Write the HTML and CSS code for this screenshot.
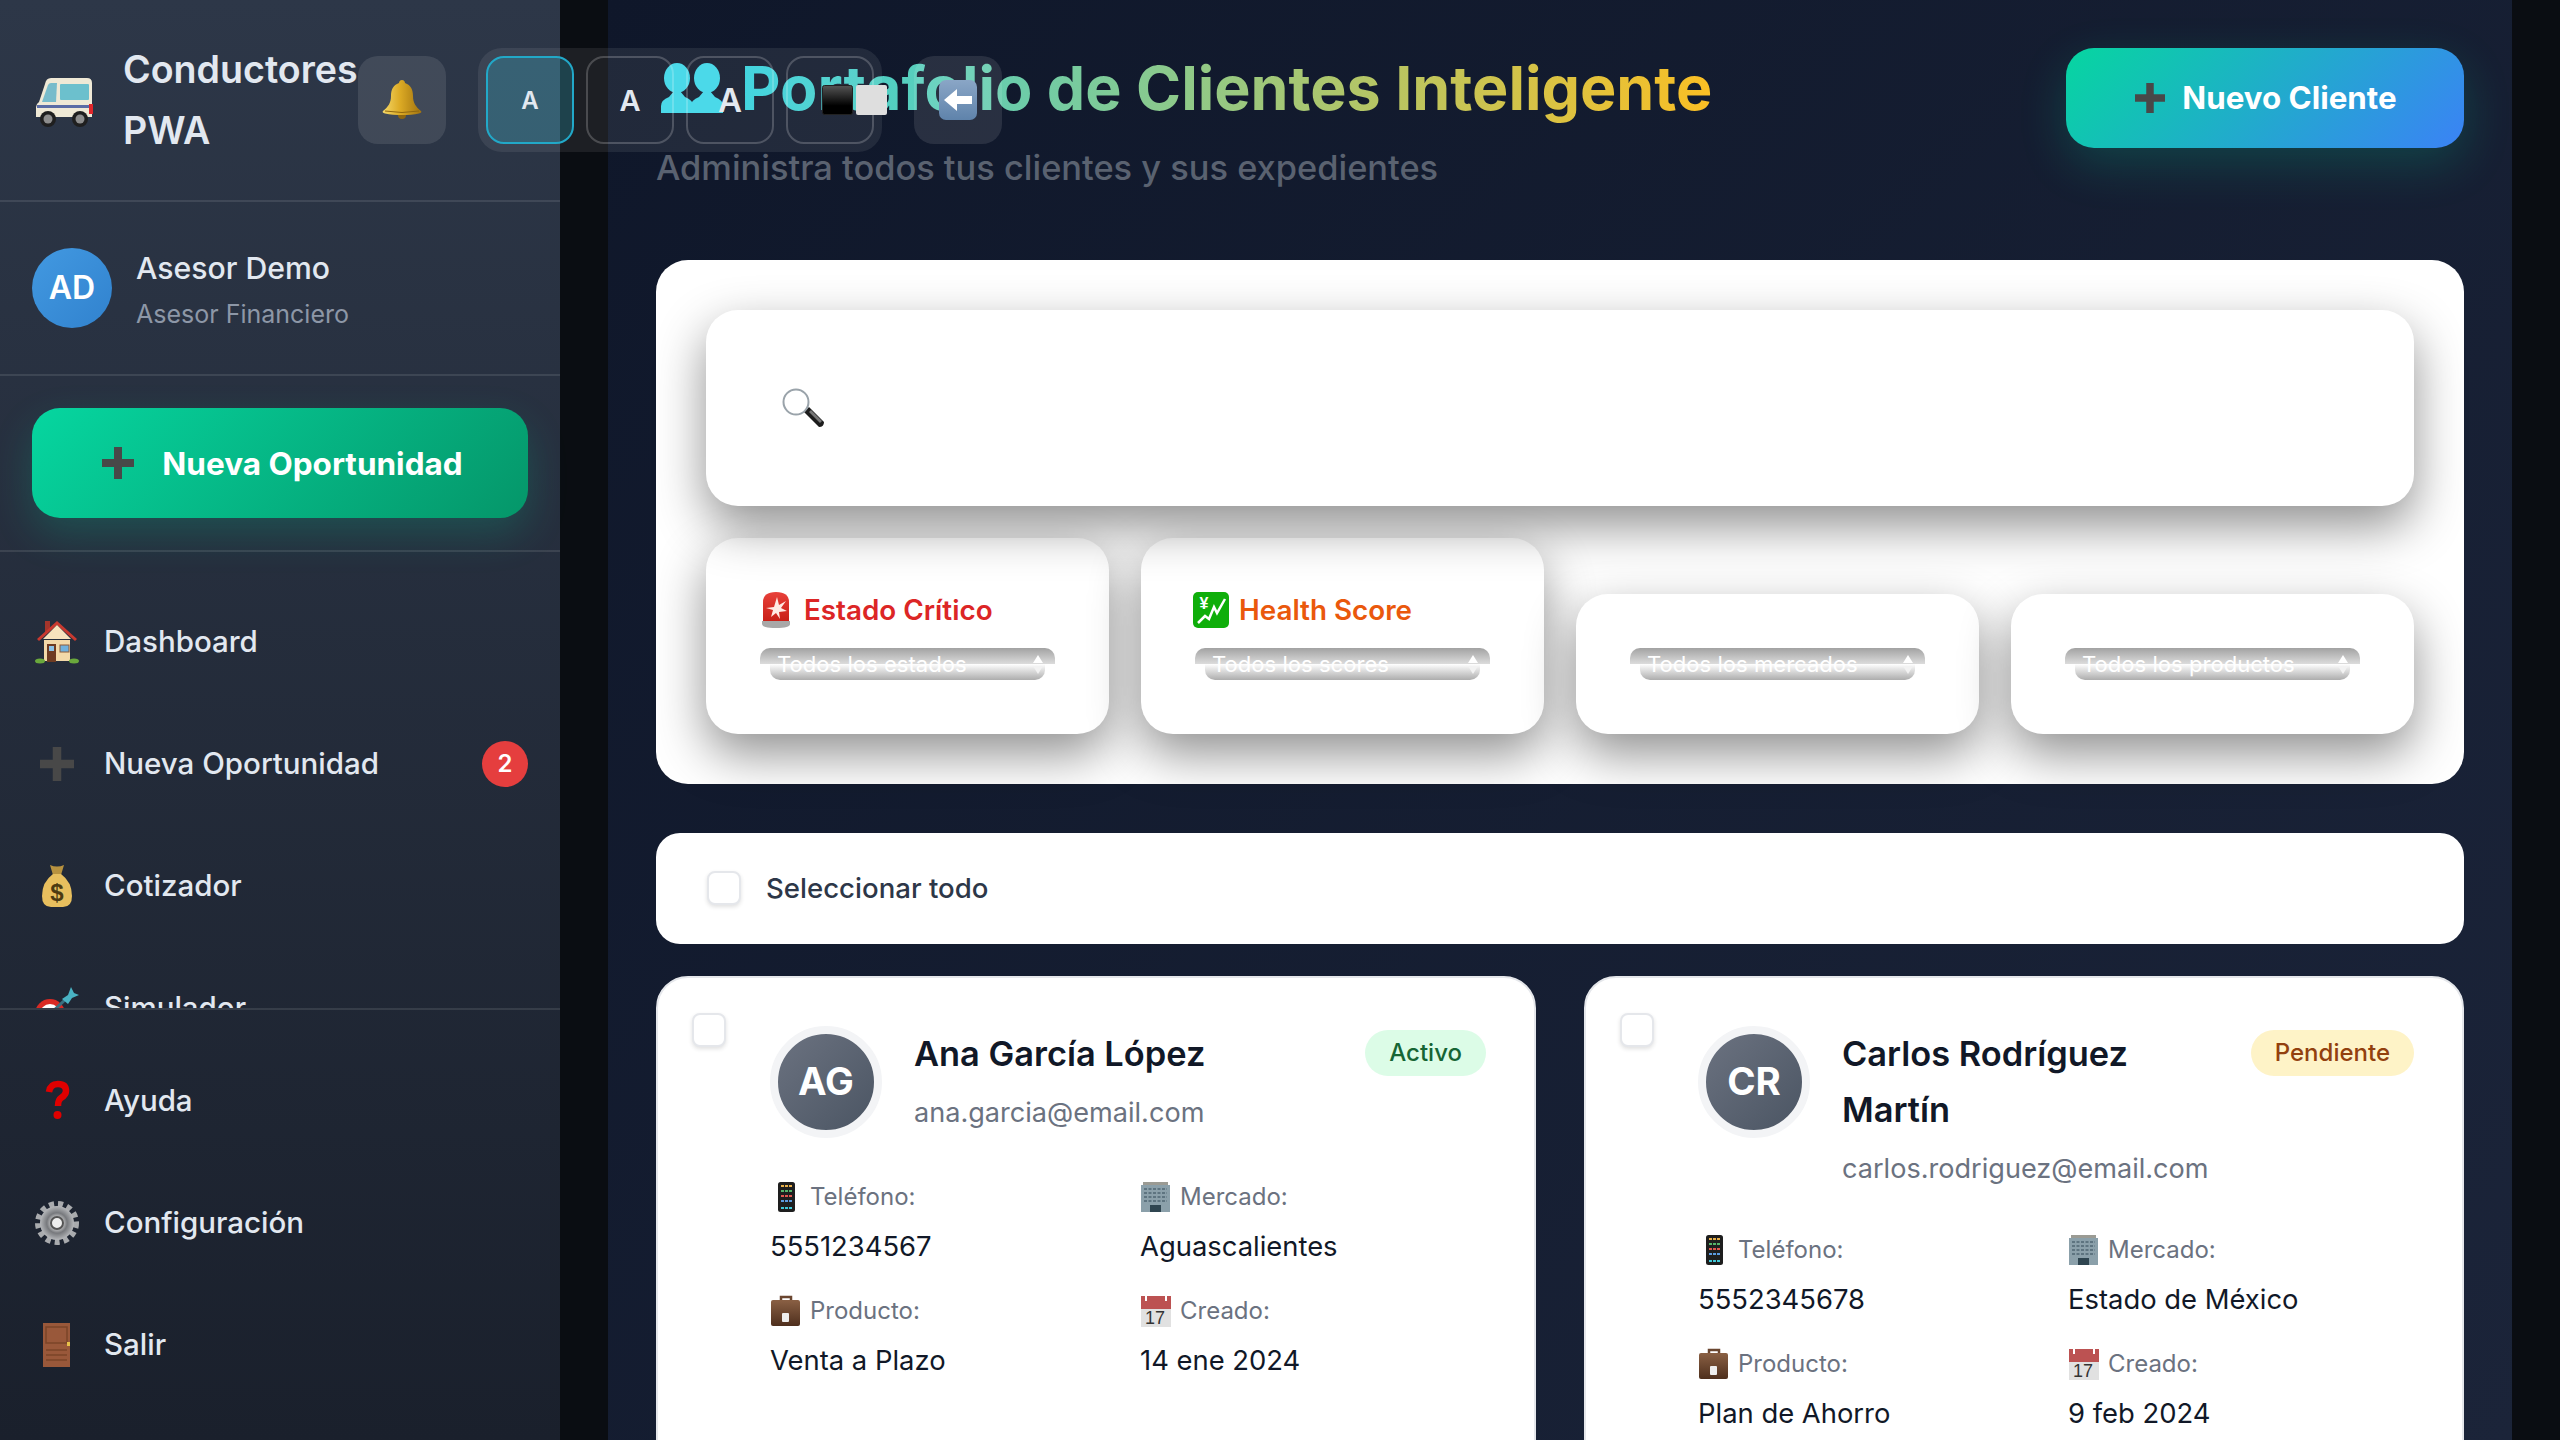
FILE: index.html
```html
<!DOCTYPE html>
<html lang="es">
<head>
    <meta charset="UTF-8">
    <meta name="viewport" content="width=device-width, initial-scale=1.0">
    <title>Portafolio de Clientes</title>
    <link rel="stylesheet" href="styles.css">
</head>
<body>
    <!-- emoji drawings, reused with <use> -->
    <svg class="sprite" xmlns="http://www.w3.org/2000/svg">
        <defs>
            <linearGradient id="goldGrad" x1="0" y1="0" x2="1" y2="0"><stop offset="0" stop-color="#f5d868"/><stop offset=".45" stop-color="#dcaa24"/><stop offset="1" stop-color="#a0720f"/></linearGradient>
            <linearGradient id="blackGrad" x1="0" y1="0" x2="0" y2="1"><stop offset="0" stop-color="#555"/><stop offset=".7" stop-color="#000"/></linearGradient>
            <linearGradient id="blueGrad" x1="0" y1="0" x2="0" y2="1"><stop offset="0" stop-color="#8aa6c6"/><stop offset="1" stop-color="#5f83ab"/></linearGradient>
            <linearGradient id="redGrad" x1="0" y1="0" x2="0" y2="1"><stop offset="0" stop-color="#e8413a"/><stop offset="1" stop-color="#c81e16"/></linearGradient>
            <linearGradient id="browngrad" x1="0" y1="0" x2="0" y2="1"><stop offset="0" stop-color="#8a6044"/><stop offset="1" stop-color="#4e2f1d"/></linearGradient>
            <radialGradient id="gearGrad"><stop offset=".2" stop-color="#e8e8e8"/><stop offset=".6" stop-color="#77797d"/><stop offset="1" stop-color="#b5b7ba"/></radialGradient>
        </defs>
        <symbol id="i-van" viewBox="0 0 58 50">
            <path d="M16 1h36q5 0 5 5v34H1V30q0-3 3-5l6-18q1-6 6-6z" fill="#efe9d6"/>
            <path d="M7 25l6-17q1-2 3-2h6l-1 19z" fill="#78bccb"/>
            <rect x="25" y="7" width="29" height="16" rx="1" fill="#6cc0cd"/>
            <rect x="2" y="28" width="53" height="3" fill="#5a6ca6"/>
            <rect x="54" y="27" width="4" height="10" fill="#e0262b"/>
            <circle cx="13" cy="42" r="8" fill="#1f1f1f"/><circle cx="13" cy="42" r="4.500" fill="#8d8d8d"/>
            <circle cx="45" cy="42" r="8" fill="#1f1f1f"/><circle cx="45" cy="42" r="4.500" fill="#8d8d8d"/>
        </symbol>
        <symbol id="i-bell" viewBox="0 0 40 40">
            <circle cx="20" cy="35" r="4" fill="#8f6710"/>
            <path d="M20 0c2 0 3 1.500 3 3 6 2 8 7 8 13 0 7 3 11 8 15 1 1 0 2-2 2.500-10 2-24 2-34 0-2-.5-3-1.500-2-2.500 5-4 8-8 8-15 0-6 2-11 8-13 0-1.500 1-3 3-3z" fill="url(#goldGrad)"/>
            <path d="M3 31q17 3 34 0" fill="none" stroke="#8f6710" stroke-width="1"/>
        </symbol>
        <symbol id="i-people" viewBox="0 0 62 50">
            <g id="bust">
                <ellipse cx="16" cy="15" rx="13" ry="15"/>
                <path d="M0 50v-7q0-6 8-9l5-6h6l5 6q8 3 8 9v7z"/>
            </g>
            <use href="#bust" x="30"/>
        </symbol>
        <symbol id="i-contrast" viewBox="0 0 65 30">
            <rect x=".5" y=".5" width="30" height="29" rx="2" fill="url(#blackGrad)" stroke="#222"/>
            <rect x="34" y="0" width="31" height="30" rx="2" fill="#dedede"/>
        </symbol>
        <symbol id="i-back" viewBox="0 0 38 40">
            <rect width="38" height="40" rx="7" fill="url(#blueGrad)"/>
            <path d="M5 20l13-11v7h15v8H18v7z" fill="#fff"/>
        </symbol>
        <symbol id="i-plus" viewBox="0 0 32 32">
            <path d="M12 0h8v12h12v8H20v12h-8V20H0v-8h12z" fill="#484848"/>
        </symbol>
        <symbol id="i-house" viewBox="0 0 44 44">
            <path d="M9 20h26v21H9z" fill="#f3d9a9"/>
            <path d="M10 1h5v8l-5 5z" fill="#a5352b"/>
            <path d="M22 1L2 19l2 2L22 5l18 16 2-2z" fill="#c8392f"/>
            <path d="M22 5L8 19h28z" fill="#f7e3bd"/>
            <rect x="12" y="24" width="9" height="18" fill="#6e3b22"/><rect x="14" y="26" width="5" height="5" fill="#8cc2e6"/>
            <rect x="25" y="25" width="9" height="7" fill="#6fb0dd" stroke="#8b5a3a"/>
            <ellipse cx="5" cy="41" rx="5" ry="2.500" fill="#6aa83c"/><ellipse cx="39" cy="41" rx="5" ry="2.500" fill="#6aa83c"/>
        </symbol>
        <symbol id="i-dart" viewBox="0 0 44 44">
            <circle cx="15" cy="28" r="15" fill="#d92a24"/><circle cx="15" cy="28" r="10" fill="#fff"/><circle cx="15" cy="28" r="5" fill="#d92a24"/>
            <path d="M15 28L32 12" stroke="#3a6f7f" stroke-width="3"/>
            <path d="M27 13l6-4 3-8 3 6 5 2-7 3-4 6z" fill="#49b3c4"/>
        </symbol>
        <symbol id="i-help" viewBox="0 0 44 44">
            <path d="M14 13q1-8 9-8 8 0 8 7 0 4-5 7-3 2-3 8" fill="none" stroke="#e00000" stroke-width="6.500"/>
            <circle cx="22.500" cy="36" r="4" fill="#e00000"/>
        </symbol>
        <symbol id="i-gear" viewBox="0 0 44 44">
            <circle cx="22" cy="22" r="19" fill="none" stroke="#a9abae" stroke-width="6" stroke-dasharray="5 4"/>
            <circle cx="22" cy="22" r="17" fill="url(#gearGrad)"/>
            <circle cx="22" cy="22" r="6" fill="#eee" stroke="#555" stroke-width="2"/>
        </symbol>
        <symbol id="i-door" viewBox="0 0 44 44">
            <rect x="8" y="0" width="27" height="44" fill="#99583a"/>
            <rect x="11" y="4" width="21" height="16" fill="none" stroke="#7b4429" stroke-width="1.500"/>
            <path d="M11 27h21M11 32h21M11 37h21" stroke="#7b4429" stroke-width="1.500"/>
            <rect x="32" y="19" width="3" height="4" fill="#e8c14a"/>
        </symbol>
        <symbol id="i-search" viewBox="0 0 42 40">
            <path d="M22 24l5-5 15 15q0 5-5 5z" fill="#1c1c1c"/>
            <path d="M27 24l2-2 11 11-2 2z" fill="#777"/>
            <circle cx="14" cy="14" r="12.500" fill="#fff" stroke="#9aa3aa" stroke-width="2"/>
        </symbol>
        <symbol id="i-siren" viewBox="0 0 28 36">
            <path d="M1 30V10Q1 0 14 0t13 10v20z" fill="url(#redGrad)"/>
            <path d="M15 5l2 8 7-4-5 7 6 3-8 1 1 7-4-6-5 4 2-7-7-2 8-1z" fill="#ffeae4"/>
            <path d="M0 29h28v3q0 4-14 4T0 32z" fill="#a8a8a8"/>
        </symbol>
        <symbol id="i-phone" viewBox="0 0 32 32">
            <rect x="8" y="1" width="17" height="30" rx="2.500" fill="#1e1e1e"/>
            <path d="M11 5h3M15 5h3M19 5h3" stroke="#e8b04a" stroke-width="2"/>
            <path d="M11 10h3M15 10h3M19 10h3" stroke="#55b46a" stroke-width="2"/>
            <path d="M11 15h3M15 15h3M19 15h3" stroke="#e0574f" stroke-width="2"/>
            <path d="M11 20h3M15 20h3M19 20h3" stroke="#5b9be0" stroke-width="2"/>
            <path d="M11 27h3M15 27h3M19 27h3" stroke="#41c8d8" stroke-width="2"/>
        </symbol>
        <symbol id="i-building" viewBox="0 0 32 32">
            <rect x="1" y="4" width="29" height="27" fill="#8ba0aa"/>
            <rect x="3" y="1" width="25" height="3" fill="#9b9b94"/>
            <path d="M4 8h23M4 12h23M4 16h23M4 20h23" stroke="#5e7480" stroke-width="2" stroke-dasharray="3 1.500"/>
            <rect x="10" y="24" width="11" height="7" fill="#2f4550"/>
        </symbol>
        <symbol id="i-case" viewBox="0 0 32 32">
            <path d="M11 6V2h10v4" fill="none" stroke="#6a4630" stroke-width="2.500"/>
            <rect x="1" y="5" width="29" height="26" rx="2" fill="url(#browngrad)"/>
            <rect x="12" y="18" width="7" height="9" rx="1" fill="#eee"/>
        </symbol>
    </svg>

    <div class="app">
        <aside class="sidebar">
            <div class="brand">
                <svg class="brand-icon"><use href="#i-van"/></svg>
                <div class="brand-name">Conductores PWA</div>
            </div>
            <div class="user">
                <div class="user-avatar">AD</div>
                <div class="user-info">
                    <div class="user-name">Asesor Demo</div>
                    <div class="user-role">Asesor Financiero</div>
                </div>
            </div>
            <div class="new-wrap">
                <button class="btn-new">
                    <svg class="plus-icon"><use href="#i-plus"/></svg>
                    Nueva Oportunidad
                </button>
            </div>
            <nav class="nav">
                <a class="nav-item"><svg class="nav-icon"><use href="#i-house"/></svg>Dashboard</a>
                <a class="nav-item"><svg class="nav-icon nav-plus"><use href="#i-plus"/></svg>Nueva Oportunidad<span class="nav-badge">2</span></a>
                <a class="nav-item">
                    <svg class="nav-icon" viewBox="0 0 44 44">
                        <path d="M15 1q7 3 14 0l-3 10h-8z" fill="#b8923f"/>
                        <path d="M18 10h8q11 8 11 22 0 11-9 11H16Q7 43 7 32 7 18 18 10z" fill="#e8bf5e"/>
                        <text x="22" y="37" class="bag-text">$</text>
                    </svg>
                    Cotizador
                </a>
                <a class="nav-item"><svg class="nav-icon"><use href="#i-dart"/></svg>Simulador</a>
            </nav>
            <div class="sidebar-footer">
                <a class="nav-item"><svg class="nav-icon"><use href="#i-help"/></svg>Ayuda</a>
                <a class="nav-item"><svg class="nav-icon"><use href="#i-gear"/></svg>Configuración</a>
                <a class="nav-item"><svg class="nav-icon"><use href="#i-door"/></svg>Salir</a>
            </div>
        </aside>

        <main class="main">
            <header class="page-header">
                <div>
                    <h1 class="page-title"><svg class="title-icon"><use href="#i-people"/></svg>Portafolio de Clientes Inteligente</h1>
                    <p class="page-subtitle">Administra todos tus clientes y sus expedientes</p>
                </div>
                <button class="btn-client">
                    <svg class="plus-icon small"><use href="#i-plus"/></svg>
                    Nuevo Cliente
                </button>
            </header>

            <section class="filters">
                <label class="search">
                    <svg class="search-icon"><use href="#i-search"/></svg>
                    <input class="search-input" type="text">
                </label>
                <div class="filter-row">
                    <div class="filter-card">
                        <div class="filter-label critical"><svg class="siren-icon"><use href="#i-siren"/></svg>Estado Crítico</div>
                        <div class="select"><div class="band-top"></div><div class="band-bottom"></div><div class="select-text"><span>Todos los estados</span><span class="arrows"></span></div></div>
                    </div>
                    <div class="filter-card">
                        <div class="filter-label health">
                            <svg class="chart-icon" viewBox="0 0 36 36">
                                <rect width="36" height="36" rx="5" fill="#0fae0a"/>
                                <text x="11" y="17" class="chart-text">¥</text>
                                <path d="M5 31l7-7 4 3 5-12 3 6 8-14" fill="none" stroke="#fff" stroke-width="2.500"/>
                            </svg>
                            Health Score
                        </div>
                        <div class="select"><div class="band-top"></div><div class="band-bottom"></div><div class="select-text"><span>Todos los scores</span><span class="arrows"></span></div></div>
                    </div>
                    <div class="filter-card">
                        <div class="select"><div class="band-top"></div><div class="band-bottom"></div><div class="select-text"><span>Todos los mercados</span><span class="arrows"></span></div></div>
                    </div>
                    <div class="filter-card">
                        <div class="select"><div class="band-top"></div><div class="band-bottom"></div><div class="select-text"><span>Todos los productos</span><span class="arrows"></span></div></div>
                    </div>
                </div>
            </section>

            <section class="select-all">
                <input class="check" type="checkbox">
                <span>Seleccionar todo</span>
            </section>

            <section class="client-grid">
                <article class="client-card">
                    <input class="check card-check" type="checkbox">
                    <div class="client-head">
                        <div class="client-avatar">AG</div>
                        <div class="client-info">
                            <h3 class="client-name">Ana García López</h3>
                            <div class="client-email">ana.garcia@email.com</div>
                        </div>
                        <span class="status active">Activo</span>
                    </div>
                    <div class="client-details">
                        <div><div class="detail-label"><svg class="detail-icon"><use href="#i-phone"/></svg>Teléfono:</div><div class="detail-value">5551234567</div></div>
                        <div><div class="detail-label"><svg class="detail-icon"><use href="#i-building"/></svg>Mercado:</div><div class="detail-value">Aguascalientes</div></div>
                        <div><div class="detail-label"><svg class="detail-icon"><use href="#i-case"/></svg>Producto:</div><div class="detail-value">Venta a Plazo</div></div>
                        <div>
                            <div class="detail-label">
                                <svg class="detail-icon" viewBox="0 0 32 32">
                                    <rect x="1" y="1" width="30" height="31" fill="#e1e1e1"/>
                                    <rect x="1" y="1" width="30" height="13" fill="#bc5252"/>
                                    <path d="M6 1v5M26 1v5" stroke="#fff" stroke-width="2"/>
                                    <text x="15" y="29" class="cal-text">17</text>
                                </svg>
                                Creado:
                            </div>
                            <div class="detail-value">14 ene 2024</div>
                        </div>
                    </div>
                </article>
                <article class="client-card">
                    <input class="check card-check" type="checkbox">
                    <div class="client-head">
                        <div class="client-avatar">CR</div>
                        <div class="client-info">
                            <h3 class="client-name">Carlos Rodríguez Martín</h3>
                            <div class="client-email">carlos.rodriguez@email.com</div>
                        </div>
                        <span class="status pending">Pendiente</span>
                    </div>
                    <div class="client-details">
                        <div><div class="detail-label"><svg class="detail-icon"><use href="#i-phone"/></svg>Teléfono:</div><div class="detail-value">5552345678</div></div>
                        <div><div class="detail-label"><svg class="detail-icon"><use href="#i-building"/></svg>Mercado:</div><div class="detail-value">Estado de México</div></div>
                        <div><div class="detail-label"><svg class="detail-icon"><use href="#i-case"/></svg>Producto:</div><div class="detail-value">Plan de Ahorro</div></div>
                        <div>
                            <div class="detail-label">
                                <svg class="detail-icon" viewBox="0 0 32 32">
                                    <rect x="1" y="1" width="30" height="31" fill="#e1e1e1"/>
                                    <rect x="1" y="1" width="30" height="13" fill="#bc5252"/>
                                    <path d="M6 1v5M26 1v5" stroke="#fff" stroke-width="2"/>
                                    <text x="15" y="29" class="cal-text">17</text>
                                </svg>
                                Creado:
                            </div>
                            <div class="detail-value">9 feb 2024</div>
                        </div>
                    </div>
                </article>
            </section>
        </main>

        <!-- fixed header buttons, they sit on top of the sidebar and title -->
        <div class="top-controls">
            <button class="ctrl-btn"><svg class="bell-icon"><use href="#i-bell"/></svg></button>
            <div class="font-group">
                <button class="font-btn size-s selected">A</button>
                <button class="font-btn size-m">A</button>
                <button class="font-btn size-l">A</button>
                <button class="font-btn contrast"><svg class="contrast-icon"><use href="#i-contrast"/></svg></button>
            </div>
            <button class="ctrl-btn"><svg class="back-icon"><use href="#i-back"/></svg></button>
        </div>
    </div>
</body>
</html>
```

FILE: styles.css
```css
* {
    box-sizing: border-box;
}

html, body {
    height: 100%;
}

body {
    margin: 0;
    background-color: #0a0d12;
    font-family: Inter, "Noto Sans", sans-serif;
    line-height: 1.6;
    overflow: hidden;
}

button {
    font-family: inherit;
    border: none;
    cursor: pointer;
}

.sprite {
    display: block;
    width: 0;
    height: 0;
}

.app {
    position: relative;
    display: flex;
    height: 1440px;
    overflow: hidden;
}

/* Sidebar */
.sidebar {
    display: flex;
    flex-direction: column;
    flex-shrink: 0;
    width: 560px;
    height: 1440px;
    background: linear-gradient(180deg, #2d3748, #1a202c);
    color: #e2e8f0;
}

.brand {
    display: flex;
    align-items: center;
    gap: 30px;
    height: 202px;
    padding: 0 32px 0 35px;
    border-bottom: 2px solid rgba(255, 255, 255, 0.1);
}

.brand-icon {
    flex-shrink: 0;
    width: 58px;
    height: 50px;
    margin-top: 4px;
}

.brand-name {
    width: 240px;
    font-size: 37.6px;
    font-weight: 600;
    line-height: 61px;
}

.user {
    display: flex;
    align-items: center;
    gap: 24px;
    height: 174px;
    padding: 0 32px;
    border-bottom: 2px solid rgba(255, 255, 255, 0.1);
}

.user-avatar {
    display: flex;
    align-items: center;
    justify-content: center;
    width: 80px;
    height: 80px;
    border-radius: 50%;
    background: linear-gradient(135deg, #4299e1, #3182ce);
    color: #fff;
    font-size: 32px;
    font-weight: 600;
}

.user-info {
    padding-top: 5px;
}

.user-name {
    font-size: 30.2px;
    font-weight: 500;
    line-height: 44px;
}

.user-role {
    margin-top: 2px;
    color: #8d97a7;
    font-size: 25px;
    line-height: 44px;
}

.new-wrap {
    padding: 32px;
    border-bottom: 2px solid rgba(255, 255, 255, 0.1);
}

.btn-new {
    display: flex;
    align-items: center;
    justify-content: center;
    gap: 28px;
    width: 100%;
    height: 110px;
    padding-left: 11px;
    border-radius: 28px;
    background: linear-gradient(135deg, #06d6a0, #059669);
    box-shadow: 0 16px 40px rgba(6, 214, 160, 0.2);
    color: #fff;
    font-size: 31.5px;
    font-weight: 700;
}

.plus-icon {
    flex-shrink: 0;
    width: 32px;
    height: 32px;
}

.plus-icon.small {
    width: 30px;
    height: 30px;
}

.nav {
    flex: 1;
    min-height: 0;
    padding-top: 29px;
    overflow: hidden;
}

.nav-item {
    display: flex;
    align-items: center;
    gap: 25px;
    height: 122px;
    padding: 0 32px 0 35px;
    color: #e2e8f0;
    font-size: 29.5px;
    font-weight: 500;
}

.nav-icon {
    flex-shrink: 0;
    width: 44px;
    height: 44px;
}

.nav-plus {
    padding: 5px;
}

.nav-badge {
    display: flex;
    align-items: center;
    justify-content: center;
    width: 46px;
    height: 46px;
    margin-left: auto;
    border-radius: 50%;
    background-color: #e53e3e;
    color: #fff;
    font-size: 24px;
    font-weight: 600;
}

.sidebar-footer {
    flex-shrink: 0;
    height: 432px;
    padding-top: 30px;
    border-top: 2px solid rgba(255, 255, 255, 0.1);
}

/* Main area */
.main {
    flex: 1;
    min-width: 0;
    height: 1440px;
    margin: 0 48px;
    padding: 48px;
    background: linear-gradient(135deg, #0f172a, #1b2439);
    overflow: hidden;
}

.page-header {
    display: flex;
    align-items: flex-start;
    justify-content: space-between;
    margin-bottom: 64px;
}

.page-title {
    display: inline-flex;
    align-items: center;
    margin: 0;
    background: linear-gradient(90deg, #22d3ee, #fbbf24);
    -webkit-background-clip: text;
    background-clip: text;
    color: transparent;
    font-size: 61px;
    font-weight: 700;
    line-height: 80px;
    white-space: nowrap;
}

.title-icon {
    flex-shrink: 0;
    width: 62px;
    height: 50px;
    margin: 0 18px 0 5px;
    fill: #3cd6e8;
}

.page-subtitle {
    margin: 12px 0 0;
    color: #5a6270;
    font-size: 34.4px;
    font-weight: 500;
    line-height: 56px;
}

.btn-client {
    display: flex;
    align-items: center;
    justify-content: center;
    gap: 17px;
    flex-shrink: 0;
    width: 398px;
    height: 100px;
    padding-left: 8px;
    border-radius: 28px;
    background: linear-gradient(135deg, #06d6a0, #3b82f6);
    box-shadow: 0 16px 48px rgba(6, 214, 160, 0.2);
    color: #fff;
    font-size: 31.3px;
    font-weight: 700;
}

/* Filters */
.filters {
    padding: 50px;
    border-radius: 32px;
    background-color: #fff;
}

.search {
    position: relative;
    z-index: 1;
    display: flex;
    align-items: center;
    gap: 24px;
    height: 196px;
    padding: 0 76px;
    border-radius: 32px;
    background-color: #fff;
    box-shadow: 0 20px 50px rgba(0, 0, 0, 0.44);
}

.search-icon {
    flex-shrink: 0;
    width: 42px;
    height: 40px;
}

.search-input {
    flex: 1;
    border: none;
    outline: none;
    font-family: inherit;
    font-size: 32px;
}

.filter-row {
    display: grid;
    grid-template-columns: repeat(4, minmax(0, 1fr));
    align-items: end;
    gap: 32px;
    margin-top: 32px;
}

.filter-card {
    padding: 54px;
    border-radius: 32px;
    background-color: #fff;
    box-shadow: 0 20px 50px rgba(0, 0, 0, 0.44);
}

.filter-label {
    display: flex;
    align-items: center;
    gap: 14px;
    margin-bottom: 20px;
    font-size: 27.8px;
    font-weight: 600;
    line-height: 36px;
}

.filter-label.critical {
    color: #dc2626;
}

.filter-label.health {
    color: #ea580c;
}

.siren-icon {
    flex-shrink: 0;
    width: 28px;
    height: 36px;
    margin-left: 2px;
}

.chart-icon {
    flex-shrink: 0;
    width: 36px;
    height: 36px;
    margin: 0 -4px 0 -2px;
}

.bag-text {
    font: 700 24px "Liberation Sans", sans-serif;
    text-anchor: middle;
    fill: #4c3a12;
}

.chart-text {
    font: 700 16px "Liberation Sans", sans-serif;
    text-anchor: middle;
    fill: #fff;
}

.cal-text {
    font: 400 18px "Liberation Sans", sans-serif;
    text-anchor: middle;
    fill: #333;
}

/* the native select renders as two offset bands in the reference */
.select {
    display: grid;
    grid-template-rows: 16px 16px;
}

.band-top {
    grid-area: 1 / 1;
    border-radius: 10px 10px 0 0;
    background: linear-gradient(180deg, #a2a2a2, #dcdcdc);
}

.band-bottom {
    grid-area: 2 / 1;
    margin: 0 10px;
    border-radius: 0 0 10px 10px;
    background: linear-gradient(180deg, #fff, #adadad);
}

.select-text {
    display: flex;
    align-items: center;
    justify-content: space-between;
    grid-area: 1 / 1 / 3 / 1;
    padding: 0 12px 0 17px;
    color: #fff;
    font-size: 22.1px;
    line-height: 32px;
}

.arrows {
    display: flex;
    flex-direction: column;
    gap: 3px;
}

.arrows::before {
    content: "";
    border-right: 5px solid transparent;
    border-bottom: 8px solid #fff;
    border-left: 5px solid transparent;
}

.arrows::after {
    content: "";
    border-top: 8px solid #f2f2f2;
    border-right: 5px solid transparent;
    border-left: 5px solid transparent;
}

/* Select all */
.select-all {
    display: flex;
    align-items: center;
    gap: 25px;
    height: 111px;
    margin-top: 49px;
    padding: 0 51px 1px;
    border-radius: 24px;
    background-color: #fff;
    color: #2d3748;
    font-size: 27.6px;
    font-weight: 500;
}

.check {
    flex-shrink: 0;
    width: 34px;
    height: 34px;
    margin: 0;
    border: 2px solid #e5e7eb;
    border-radius: 8px;
    background-color: #fff;
    box-shadow: 0 2px 4px rgba(0, 0, 0, 0.12);
    -webkit-appearance: none;
    appearance: none;
}

/* Client cards */
.client-grid {
    display: grid;
    grid-template-columns: repeat(2, minmax(0, 1fr));
    gap: 48px;
    margin-top: 32px;
}

.client-card {
    position: relative;
    min-height: 600px;
    padding: 48px 48px 48px 112px;
    border: 2px solid #e5e7eb;
    border-radius: 32px;
    background-color: #fff;
}

.card-check {
    position: absolute;
    top: 35px;
    left: 34px;
}

.client-head {
    display: flex;
    align-items: flex-start;
    gap: 32px;
    margin-bottom: 38px;
}

.client-avatar {
    display: flex;
    align-items: center;
    justify-content: center;
    flex-shrink: 0;
    width: 112px;
    height: 112px;
    border: 8px solid #f3f4f6;
    border-radius: 50%;
    background: linear-gradient(135deg, #6b7280, #4b5563);
    color: #fff;
    font-size: 38.4px;
    font-weight: 700;
}

.client-info {
    flex: 1;
    min-width: 0;
}

.client-name {
    margin: 0 0 9px;
    color: #111827;
    font-size: 34.4px;
    font-weight: 600;
    line-height: 56px;
}

.client-email {
    color: #6b7280;
    font-size: 27.1px;
    line-height: 44px;
}

.status {
    flex-shrink: 0;
    margin-top: 4px;
    padding: 0 24px;
    border-radius: 24px;
    font-size: 24px;
    font-weight: 500;
    line-height: 46px;
}

.status.active {
    background-color: #dcfce7;
    color: #166534;
}

.status.pending {
    background-color: #fef3c7;
    color: #92400e;
}

.client-details {
    display: grid;
    grid-template-columns: repeat(2, minmax(0, 1fr));
    gap: 21px 24px;
}

.detail-label {
    display: flex;
    align-items: center;
    gap: 8px;
    margin-bottom: 6px;
    color: #6b7280;
    font-size: 24px;
    font-weight: 400;
    line-height: 41px;
}

.detail-icon {
    flex-shrink: 0;
    width: 32px;
    height: 32px;
}

.detail-value {
    color: #111827;
    font-size: 27.4px;
    line-height: 46px;
}

/* Header buttons floating over everything */
.top-controls {
    position: absolute;
    top: 48px;
    left: 358px;
    display: flex;
    align-items: center;
    gap: 32px;
}

.ctrl-btn {
    display: flex;
    align-items: center;
    justify-content: center;
    width: 88px;
    height: 88px;
    border-radius: 20px;
    background-color: rgba(255, 255, 255, 0.1);
}

.bell-icon {
    width: 40px;
    height: 40px;
}

.back-icon {
    width: 38px;
    height: 40px;
}

.font-group {
    display: flex;
    gap: 12px;
    padding: 8px;
    border-radius: 24px;
    background-color: rgba(255, 255, 255, 0.08);
}

.font-btn {
    display: flex;
    align-items: center;
    width: 88px;
    height: 88px;
    justify-content: center;
    padding: 0;
    border: 2px solid rgba(255, 255, 255, 0.2);
    border-radius: 18px;
    background-color: transparent;
    color: #e2e8f0;
    font-weight: 600;
}

.font-btn.selected {
    border-color: #22a8c8;
    background-color: rgba(34, 211, 238, 0.2);
}

.font-btn.size-s {
    font-size: 24px;
}

.font-btn.size-m {
    font-size: 29px;
}

.font-btn.size-l {
    font-size: 33px;
}

.font-btn.contrast {
    justify-content: flex-start;
    padding-left: 34px;
}

.contrast-icon {
    flex-shrink: 0;
    width: 65px;
    height: 30px;
}
```
